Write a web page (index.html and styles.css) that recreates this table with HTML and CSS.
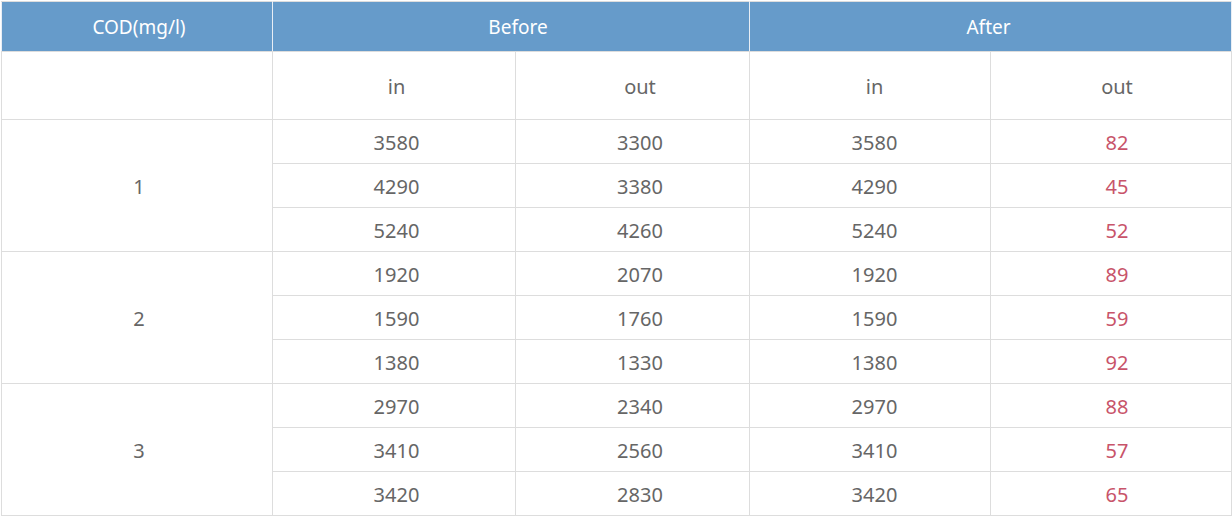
FILE: index.html
```html
<!DOCTYPE html>
<html>
<head>
<meta charset="utf-8">
<link rel="stylesheet" href="styles.css">
</head>
<body>
<div class="wrap">
<table class="cod">
  <colgroup>
    <col class="c1"><col class="c2"><col class="c3"><col class="c4"><col class="c5">
  </colgroup>
  <thead>
    <tr class="head">
      <th class="g">COD(mg/l)</th>
      <th class="hb" colspan="2">Before</th>
      <th class="ha" colspan="2">After</th>
    </tr>
  </thead>
  <tbody>
    <tr class="sub">
      <td class="g"></td><td class="bi">in</td><td class="bo">out</td><td class="ai">in</td><td class="ao">out</td>
    </tr>
    <tr><td class="g" rowspan="3">1</td><td class="bi">3580</td><td class="bo">3300</td><td class="ai">3580</td><td class="ao red">82</td></tr>
    <tr><td class="bi">4290</td><td class="bo">3380</td><td class="ai">4290</td><td class="ao red">45</td></tr>
    <tr><td class="bi">5240</td><td class="bo">4260</td><td class="ai">5240</td><td class="ao red">52</td></tr>
    <tr><td class="g" rowspan="3">2</td><td class="bi">1920</td><td class="bo">2070</td><td class="ai">1920</td><td class="ao red">89</td></tr>
    <tr><td class="bi">1590</td><td class="bo">1760</td><td class="ai">1590</td><td class="ao red">59</td></tr>
    <tr><td class="bi">1380</td><td class="bo">1330</td><td class="ai">1380</td><td class="ao red">92</td></tr>
    <tr><td class="g" rowspan="3">3</td><td class="bi">2970</td><td class="bo">2340</td><td class="ai">2970</td><td class="ao red">88</td></tr>
    <tr><td class="bi">3410</td><td class="bo">2560</td><td class="ai">3410</td><td class="ao red">57</td></tr>
    <tr><td class="bi">3420</td><td class="bo">2830</td><td class="ai">3420</td><td class="ao red">65</td></tr>
  </tbody>
</table>
</div>
</body>
</html>
```

FILE: styles.css
```css
html, body {
  margin: 0;
  padding: 0;
  background: #fff;
}
.wrap {
  padding: 1px;
}
.cod {
  border-collapse: collapse;
  table-layout: fixed;
  width: 1230px;
  font-family: "Noto Sans", "Open Sans", sans-serif;
  font-size: 20px;
  color: #666;
}
.c1 { width: 271px; }
.c2 { width: 243px; }
.c3 { width: 234px; }
.c4 { width: 241px; }
.c5 { width: 241px; }
.cod th, .cod td {
  border: 1px solid #dddddd;
  text-align: center;
  vertical-align: middle;
  padding: 2px 0 0 0;
  font-weight: normal;
  line-height: 1;
}
.head th {
  background: #669bca;
  color: #fff;
  height: 48px;
  padding-top: 1px;
  font-size: 19px;
  border-color: #dddddd #e8eef5 #dddddd #e8eef5;
}
.cod tbody tr td {
  height: 41px;
}
.cod tbody tr.sub td {
  height: 65px;
}
.g { padding-left: 4px !important; }
.bi { padding-left: 5px !important; }
.bo { padding-left: 15px !important; }
.ai { padding-left: 9px !important; }
.ao { padding-left: 12px !important; }
.hb { padding-left: 14px !important; }
.ha { padding-right: 4px !important; }
.red {
  color: #c8546a;
}
```
